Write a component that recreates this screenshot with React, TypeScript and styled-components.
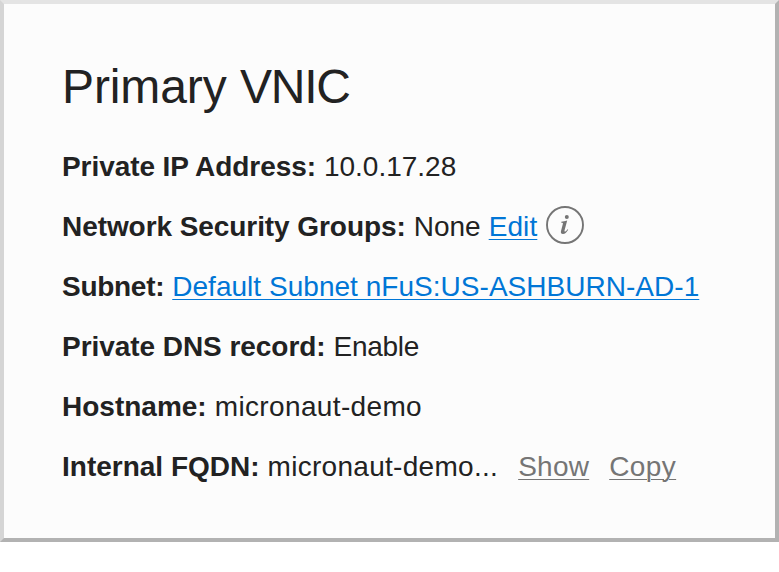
import React from 'react';
import styled, { createGlobalStyle } from 'styled-components';

const GlobalStyle = createGlobalStyle`
  * { box-sizing: border-box; }
  body { margin: 0; background: #fff; }
`;

const Panel = styled.section`
  width: 779px;
  height: 542px;
  padding: 55px 58px 0;
  background: #fcfcfc;
  border: 4px solid;
  border-color: #e4e4e4 #b2b2b2 #b2b2b2 #d5d5d5;
  color: #222;
  font-family: "Liberation Sans", Arial, sans-serif;
`;

const Title = styled.h1`
  margin: 0 0 22px;
  font-size: 48px;
  font-weight: 400;
  line-height: 56px;
  letter-spacing: -0.1px;
  white-space: nowrap;
`;

const Acronym = styled.span`
  letter-spacing: -1.2px;
`;

const Row = styled.div`
  display: flex;
  align-items: center;
  height: 60px;
  font-size: 28px;
  white-space: nowrap;
`;

const Label = styled.strong<{ $tracking?: number }>`
  margin-right: 8px;
  font-weight: 700;
  letter-spacing: ${({ $tracking = 0 }) => $tracking}px;
`;

const Value = styled.span<{ $tracking?: number }>`
  letter-spacing: ${({ $tracking = 0 }) => $tracking}px;
`;

const Link = styled.a<{ $muted?: boolean; $gap?: number; $tracking?: number }>`
  margin-left: ${({ $gap = 0 }) => $gap}px;
  color: ${({ $muted }) => ($muted ? '#757575' : '#0076d6')};
  letter-spacing: ${({ $tracking = 0 }) => $tracking}px;
  text-decoration: underline;
  text-decoration-thickness: 1px;
  text-underline-offset: 3px;
`;

const InfoIcon = styled.svg`
  width: 38px;
  height: 38px;
  margin: 0 0 4px 8.8px;
  flex: none;
`;

export default function App() {
  return (
    <>
      <GlobalStyle />
      <Panel>
        <Title>Primary <Acronym>VNIC</Acronym></Title>
        <Row><Label $tracking={-0.07}>Private IP Address:</Label><Value>10.0.17.28</Value></Row>
        <Row>
          <Label $tracking={-0.07}>Network Security Groups:</Label>
          <Value>None</Value>
          <Link $gap={8} $tracking={0.1}>Edit</Link>
          <InfoIcon viewBox="0 0 38 38" fill="none" aria-label="Information">
            <circle cx="19" cy="19" r="18" stroke="#757575" strokeWidth="1.9" />
            <circle cx="20.8" cy="10.9" r="2" fill="#757575" />
            <path d="M15.3 15.7C17.3 15.5 19.1 15.1 21.2 14.6L18.7 23.8C18.4 25 18.4 25.6 18.9 25.6C19.6 25.6 20.6 24.5 21.5 23.2L22.2 23.7C20.6 26.5 18.8 27.9 17 27.9C15.2 27.9 14.5 26.7 15 24.9L16.9 17.8C17.1 17 16.8 16.8 15.3 16.7Z" fill="#757575" />
          </InfoIcon>
        </Row>
        <Row><Label $tracking={-0.28}>Subnet:</Label><Link $tracking={0.03}>Default Subnet nFuS:US-ASHBURN-AD-1</Link></Row>
        <Row><Label $tracking={-0.05}>Private DNS record:</Label><Value $tracking={-0.3}>Enable</Value></Row>
        <Row><Label>Hostname:</Label><Value $tracking={0.36}>micronaut-demo</Value></Row>
        <Row><Label>Internal FQDN:</Label><Value $tracking={0.29}>micronaut-demo...</Value><Link $muted $gap={20} $tracking={0.25}>Show</Link><Link $muted $gap={20} $tracking={0.4}>Copy</Link></Row>
      </Panel>
    </>
  );
}
